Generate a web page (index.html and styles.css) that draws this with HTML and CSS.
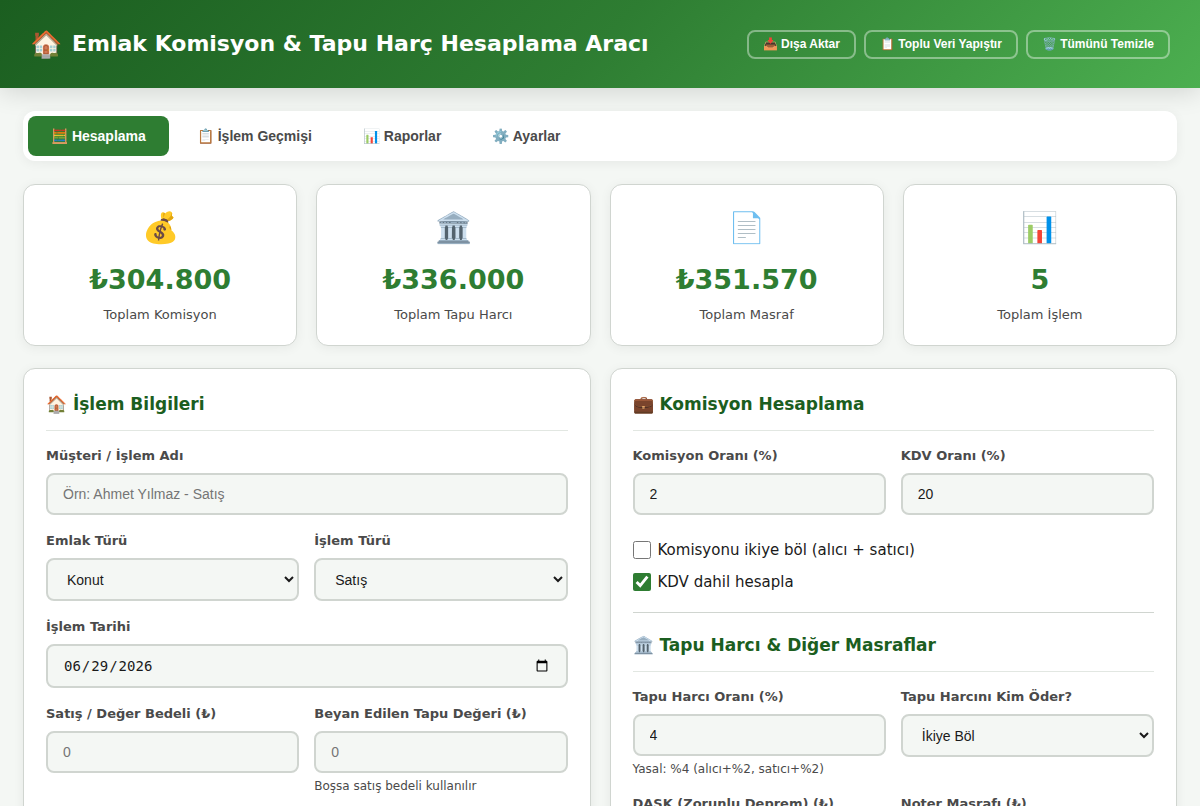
FILE: index.html
```
<!DOCTYPE html>
<html lang="tr">
<head>
<meta charset="utf-8">
<title>Emlak Komisyon &amp; Tapu Harç Hesaplama Aracı</title>
<link rel="stylesheet" href="styles.css">
</head>
<body>
<header class="header">
  <h1><span class="logo">🏠</span>Emlak Komisyon &amp; Tapu Harç Hesaplama Aracı</h1>
  <div class="actions">
    <button class="action">📥 Dışa Aktar</button>
    <button class="action">📋 Toplu Veri Yapıştır</button>
    <button class="action">🗑️ Tümünü Temizle</button>
  </div>
</header>
<main class="container">
  <nav class="tabs">
    <button class="tab active">🧮 Hesaplama</button>
    <button class="tab">📋 İşlem Geçmişi</button>
    <button class="tab">📊 Raporlar</button>
    <button class="tab">⚙️ Ayarlar</button>
  </nav>
  <section class="stats">
    <div class="stat"><div class="icon">💰</div><div class="value">₺304.800</div><div class="label">Toplam Komisyon</div></div>
    <div class="stat"><div class="icon">🏛️</div><div class="value">₺336.000</div><div class="label">Toplam Tapu Harcı</div></div>
    <div class="stat"><div class="icon">📄</div><div class="value">₺351.570</div><div class="label">Toplam Masraf</div></div>
    <div class="stat"><div class="icon">📊</div><div class="value">5</div><div class="label">Toplam İşlem</div></div>
  </section>
  <div class="panels">
    <section class="panel">
      <h2>🏠 İşlem Bilgileri</h2>
      <div class="field"><label for="name">Müşteri / İşlem Adı</label><input id="name" type="text" placeholder="Örn: Ahmet Yılmaz - Satış"></div>
      <div class="row">
        <div class="field"><label for="kind">Emlak Türü</label><select id="kind"><option>Konut</option></select></div>
        <div class="field"><label for="deal">İşlem Türü</label><select id="deal"><option>Satış</option></select></div>
      </div>
      <div class="field"><label for="date">İşlem Tarihi</label><input id="date" type="date" value="2026-06-29"></div>
      <div class="row">
        <div class="field"><label for="price">Satış / Değer Bedeli (₺)</label><input id="price" type="number" placeholder="0"></div>
        <div class="field"><label for="declared">Beyan Edilen Tapu Değeri (₺)</label><input id="declared" type="number" placeholder="0"><small>Boşsa satış bedeli kullanılır</small></div>
      </div>
    </section>
    <section class="panel">
      <h2>💼 Komisyon Hesaplama</h2>
      <div class="row">
        <div class="field"><label for="rate">Komisyon Oranı (%)</label><input id="rate" type="number" value="2"></div>
        <div class="field"><label for="vat">KDV Oranı (%)</label><input id="vat" type="number" value="20"></div>
      </div>
      <div class="checks">
        <div class="check"><input id="split" type="checkbox"><label for="split">Komisyonu ikiye böl (alıcı + satıcı)</label></div>
        <div class="check"><input id="incl" type="checkbox" checked><label for="incl">KDV dahil hesapla</label></div>
      </div>
      <hr>
      <h2>🏛️ Tapu Harcı &amp; Diğer Masraflar</h2>
      <div class="row">
        <div class="field"><label for="deed">Tapu Harcı Oranı (%)</label><input id="deed" type="number" value="4"><small>Yasal: %4 (alıcı+%2, satıcı+%2)</small></div>
        <div class="field"><label for="payer">Tapu Harcını Kim Öder?</label><select id="payer"><option>İkiye Böl</option></select></div>
      </div>
      <div class="row">
        <div class="field"><label for="dask">DASK (Zorunlu Deprem) (₺)</label><input id="dask" type="number" placeholder="0"></div>
        <div class="field"><label for="notary">Noter Masrafı (₺)</label><input id="notary" type="number" placeholder="0"></div>
      </div>
    </section>
  </div>
</main>
</body>
</html>
```
FILE: styles.css
```
* { box-sizing: border-box; margin: 0; padding: 0; }
body {
  background: #f4f7f4;
  color: #1a1a1a;
  font-family: "DejaVu Sans", sans-serif;
  font-size: 16px;
  line-height: 1.6;
}
.header {
  display: flex;
  align-items: center;
  justify-content: space-between;
  padding: 24px 30px;
  color: #fff;
  background: linear-gradient(135deg, #1b5e20 0%, #2e7d32 50%, #4caf50 100%);
  box-shadow: 0 4px 24px rgba(0, 0, 0, 0.14);
}
.header h1 { display: flex; align-items: center; gap: 10px; font-size: 22px; line-height: 40px; }
.logo { font-size: 26px; }
.actions { display: flex; gap: 8px; }
.action {
  padding: 5px 14px;
  border: 2px solid rgba(255, 255, 255, 0.4);
  border-radius: 8px;
  background: none;
  color: #fff;
  font: bold 12px/15px "Liberation Sans", sans-serif;
}
.container { padding: 23px; }
.tabs {
  display: flex;
  gap: 5px;
  margin-bottom: 23px;
  padding: 5px;
  border-radius: 12px;
  background: #fff;
  box-shadow: 0 2px 12px rgba(0, 0, 0, 0.06);
}
.tab {
  padding: 11px 23px;
  border: 0;
  border-radius: 8px;
  background: none;
  color: #4a4a4a;
  font: bold 14px/18px "Liberation Sans", sans-serif;
}
.tab.active { background: #2e7d32; color: #fff; }
.stats {
  display: grid;
  grid-template-columns: repeat(4, 1fr);
  gap: 19px;
  margin-bottom: 22px;
}
.stat, .panel {
  border: 1px solid #d0d5d0;
  border-radius: 12px;
  background: #fff;
  box-shadow: 0 2px 12px rgba(0, 0, 0, 0.06);
}
.stat { padding: 18px; text-align: center; }
.icon { font-size: 30px; line-height: 49px; }
.value { margin-top: 6px; color: #2e7d32; font-size: 27px; font-weight: bold; line-height: 44px; }
.label { color: #4a4a4a; font-size: 13px; line-height: 25px; }
.panels { display: grid; grid-template-columns: 1fr 1fr; gap: 19px; }
.panel { padding: 22px; }
.panel h2 {
  margin-bottom: 14px;
  padding-bottom: 13px;
  border-bottom: 1px solid #e2e7e2;
  color: #1b5e20;
  font-size: 17px;
  line-height: 26px;
}
.row { display: grid; grid-template-columns: 1fr 1fr; gap: 15px; }
.field { margin-bottom: 15px; }
.row .field { min-width: 0; }
.field label {
  display: block;
  margin-bottom: 6px;
  color: #4a4a4a;
  font-size: 13px;
  font-weight: bold;
  line-height: 22px;
}
.field input, .field select {
  display: block;
  width: 100%;
  height: 42px;
  padding: 10px 15px;
  border: 2px solid #d0d5d0;
  border-radius: 8px;
  background: #f4f7f4;
  color: #1a1a1a;
  font: 14px "Liberation Sans", sans-serif;
}
.field select { height: 43px; }
.field input[type="date"] { height: 44px; font-family: "DejaVu Sans Mono", monospace; }
.field small { display: block; margin-top: 4px; color: #4a4a4a; font-size: 12px; line-height: 18px; }
.checks { padding-top: 7px; }
.check { display: flex; align-items: center; gap: 7px; margin-bottom: 6px; font-size: 15px; line-height: 26px; }
.check input { width: 18px; height: 18px; accent-color: #2e7d32; }
.panel hr { margin: 17px 0 19px; border: 0; border-top: 1px solid #d0d5d0; }
```
